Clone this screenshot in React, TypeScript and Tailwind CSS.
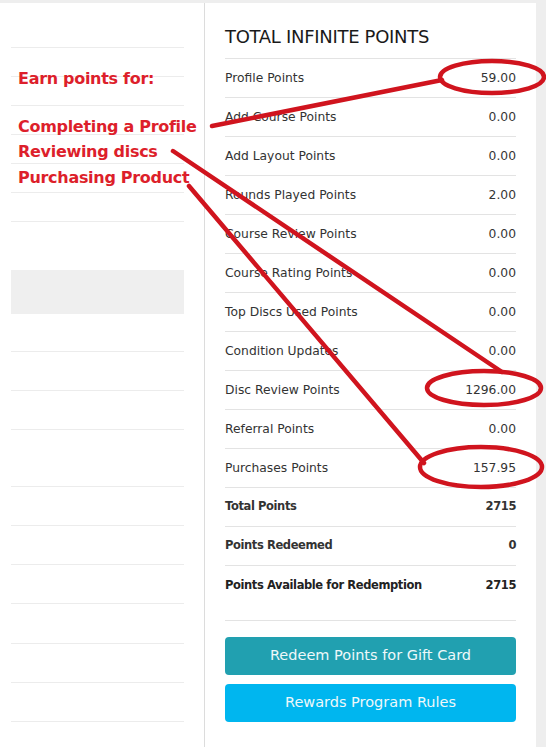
import React from "react";

const leftSegments: { h: number; border: boolean; bg?: boolean }[] = [
  { h: 45, border: true },
  { h: 29, border: true },
  { h: 29, border: true },
  { h: 29, border: true },
  { h: 29, border: true },
  { h: 29, border: true },
  { h: 29, border: true },
  { h: 48, border: false },
  { h: 44, border: false, bg: true },
  { h: 38, border: true },
  { h: 39, border: true },
  { h: 39, border: true },
  { h: 57, border: true },
  { h: 39, border: true },
  { h: 39, border: true },
  { h: 39, border: true },
  { h: 40, border: true },
  { h: 39, border: true },
  { h: 39, border: true },
];

const rows: { label: string; value: string; bold?: boolean }[] = [
  { label: "Profile Points", value: "59.00" },
  { label: "Add Course Points", value: "0.00" },
  { label: "Add Layout Points", value: "0.00" },
  { label: "Rounds Played Points", value: "2.00" },
  { label: "Course Review Points", value: "0.00" },
  { label: "Course Rating Points", value: "0.00" },
  { label: "Top Discs Used Points", value: "0.00" },
  { label: "Condition Updates", value: "0.00" },
  { label: "Disc Review Points", value: "1296.00" },
  { label: "Referral Points", value: "0.00" },
  { label: "Purchases Points", value: "157.95" },
  { label: "Total Points", value: "2715", bold: true },
  { label: "Points Redeemed", value: "0", bold: true },
];

export default function App() {
  return (
    <div
      className="relative w-[546px] h-[747px] overflow-hidden bg-[#eeeeee] pt-[3px] pr-[10px]"
      style={{ fontFamily: '"DejaVu Sans", Verdana, sans-serif' }}
    >
      <div className="flex h-full bg-white">
        {/* left column */}
        <div className="w-[205px] shrink-0 border-r border-[#dcdcdc] pl-[11px] pr-[20px]">
          {leftSegments.map((s, i) => (
            <div
              key={i}
              style={{ height: s.h }}
              className={
                s.bg
                  ? "bg-[#efefef]"
                  : s.border
                  ? "border-b border-[#ececec]"
                  : ""
              }
            />
          ))}
        </div>
        {/* right column */}
        <div className="flex-1 pl-[20px] pr-[20px]">
          <div className="h-[56px] border-b border-[#e3e3e3] flex items-end pb-[10px]">
            <h2 className="text-[18px] leading-[22px] text-[#1a1a1a] tracking-[-0.3px]">
              TOTAL INFINITE POINTS
            </h2>
          </div>
          {rows.map((r) => (
            <div
              key={r.label}
              className={
                "h-[39px] border-b border-[#e3e3e3] flex items-center justify-between text-[#333333] " +
                (r.bold
                  ? "text-[11.5px] font-bold tracking-[-0.4px] text-[#222222]"
                  : "text-[12.3px]")
              }
            >
              <span>{r.label}</span>
              <span>{r.value}</span>
            </div>
          ))}
          <div className="h-[55px] border-b border-[#e3e3e3] flex items-start justify-between pt-[11px] text-[11.5px] font-bold tracking-[-0.4px] text-[#222222]">
            <span>Points Available for Redemption</span>
            <span>2715</span>
          </div>
          <div className="mt-[16px] flex flex-col gap-[9px]">
            <button className="h-[38px] w-full rounded-[4px] bg-[#21a0b0] text-[#eef8fa] text-[14.5px]">
              Redeem Points for Gift Card
            </button>
            <button className="h-[38px] w-full rounded-[4px] bg-[#00b6ef] text-[#eef8fa] text-[14.5px]">
              Rewards Program Rules
            </button>
          </div>
        </div>
      </div>

      {/* annotation overlay */}
      <div className="absolute left-[18px] top-[66px] text-[#dd1f2b] font-bold text-[16px] leading-[25.5px] tracking-[-0.3px]">
        <div>Earn points for:</div>
        <div className="h-[22px]" />
        <div>Completing a Profile</div>
        <div>Reviewing discs</div>
        <div>Purchasing Product</div>
      </div>
      <svg
        className="absolute left-0 top-0 pointer-events-none"
        width={546}
        height={747}
        viewBox="0 0 546 747"
      >
        <g stroke="#d0141e" strokeWidth={4.5} fill="none" strokeLinecap="round">
          <line x1={212} y1={126} x2={442} y2={80} />
          <line x1={173} y1={151} x2={502} y2={372} />
          <line x1={189} y1={186} x2={424} y2={463} />
          <ellipse cx={492} cy={77} rx={52} ry={16} />
          <ellipse cx={484} cy={388} rx={57} ry={17} />
          <ellipse cx={481} cy={467} rx={61} ry={20} />
        </g>
      </svg>
    </div>
  );
}
